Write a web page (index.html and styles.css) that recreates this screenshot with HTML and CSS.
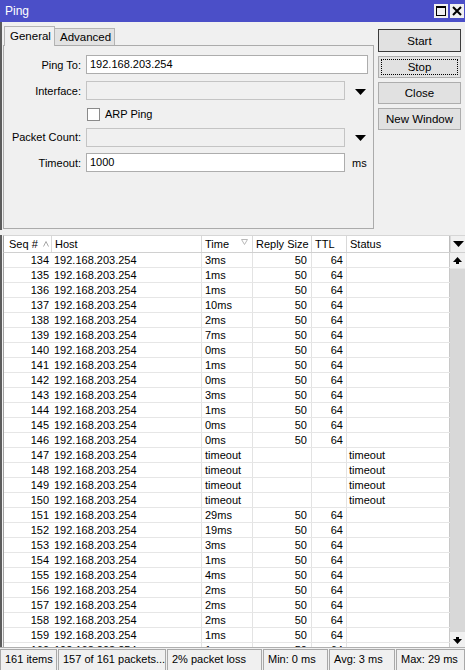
FILE: index.html
```html
<!DOCTYPE html>
<html>
<head>
<meta charset="utf-8">
<link rel="stylesheet" href="styles.css">
</head>
<body>
<div class="window">
  <div class="titlebar">
    <span class="title">Ping</span>
    <div class="tb-btns">
      <span class="tb-btn"><svg width="10" height="10" viewBox="0 0 10 10"><rect x="0.5" y="0.5" width="9" height="9" fill="none" stroke="#000" stroke-width="1"/><rect x="0" y="0" width="10" height="2" fill="#000"/></svg></span>
      <span class="tb-btn"><svg width="10" height="10" viewBox="0 0 10 10"><path d="M1 1 L9 9 M9 1 L1 9" stroke="#000" stroke-width="2"/></svg></span>
    </div>
  </div>
  <div class="top">
    <div class="leftcol">
      <div class="tabs">
        <div class="tab active">General</div>
        <div class="tab">Advanced</div>
      </div>
      <div class="panel">
        <div class="form">
          <div class="lbl">Ping To:</div>
          <div class="input span2">192.168.203.254</div>
          <div class="lbl">Interface:</div>
          <div class="input disabled"></div>
          <div class="dd"><svg width="11" height="6" viewBox="0 0 11 6"><polygon points="0,0 11,0 5.5,6" fill="#000"/></svg></div>
          <div class="lbl"></div>
          <div class="check span2"><span class="box"></span>ARP Ping</div>
          <div class="lbl">Packet Count:</div>
          <div class="input disabled"></div>
          <div class="dd"><svg width="11" height="6" viewBox="0 0 11 6"><polygon points="0,0 11,0 5.5,6" fill="#000"/></svg></div>
          <div class="lbl">Timeout:</div>
          <div class="input">1000</div>
          <div class="unit">ms</div>
        </div>
      </div>
    </div>
    <div class="buttons">
      <div class="btn default">Start</div>
      <div class="btn focus"><span>Stop</span></div>
      <div class="btn">Close</div>
      <div class="btn">New Window</div>
    </div>
  </div>
  <div class="table">
    <div class="thead">
      <div class="th c-seq">Seq #<svg class="sort" width="6" height="6" viewBox="0 0 6 6"><path d="M0.5 5.5 L3 0.5 L5.5 5.5" fill="none" stroke="#a8a8a8" stroke-width="1"/></svg></div>
      <div class="th c-host">Host</div>
      <div class="th c-time">Time<svg class="filt" width="7" height="6" viewBox="0 0 7 6"><path d="M0.5 0.5 L6.5 0.5 L3.5 5.5 Z" fill="none" stroke="#b8b8b8" stroke-width="1"/></svg></div>
      <div class="th c-reply">Reply Size</div>
      <div class="th c-ttl">TTL</div>
      <div class="th c-status">Status</div>
      <div class="th c-menu"><svg width="11" height="6" viewBox="0 0 11 6"><polygon points="0,0 11,0 5.5,6" fill="#000"/></svg></div>
    </div>
    <div class="tbody">
      <div class="rows">
        <div class="row"><div class="c-seq">134</div><div class="c-host">192.168.203.254</div><div class="c-time">3ms</div><div class="c-reply">50</div><div class="c-ttl">64</div><div class="c-status"></div></div>
        <div class="row"><div class="c-seq">135</div><div class="c-host">192.168.203.254</div><div class="c-time">1ms</div><div class="c-reply">50</div><div class="c-ttl">64</div><div class="c-status"></div></div>
        <div class="row"><div class="c-seq">136</div><div class="c-host">192.168.203.254</div><div class="c-time">1ms</div><div class="c-reply">50</div><div class="c-ttl">64</div><div class="c-status"></div></div>
        <div class="row"><div class="c-seq">137</div><div class="c-host">192.168.203.254</div><div class="c-time">10ms</div><div class="c-reply">50</div><div class="c-ttl">64</div><div class="c-status"></div></div>
        <div class="row"><div class="c-seq">138</div><div class="c-host">192.168.203.254</div><div class="c-time">2ms</div><div class="c-reply">50</div><div class="c-ttl">64</div><div class="c-status"></div></div>
        <div class="row"><div class="c-seq">139</div><div class="c-host">192.168.203.254</div><div class="c-time">7ms</div><div class="c-reply">50</div><div class="c-ttl">64</div><div class="c-status"></div></div>
        <div class="row"><div class="c-seq">140</div><div class="c-host">192.168.203.254</div><div class="c-time">0ms</div><div class="c-reply">50</div><div class="c-ttl">64</div><div class="c-status"></div></div>
        <div class="row"><div class="c-seq">141</div><div class="c-host">192.168.203.254</div><div class="c-time">1ms</div><div class="c-reply">50</div><div class="c-ttl">64</div><div class="c-status"></div></div>
        <div class="row"><div class="c-seq">142</div><div class="c-host">192.168.203.254</div><div class="c-time">0ms</div><div class="c-reply">50</div><div class="c-ttl">64</div><div class="c-status"></div></div>
        <div class="row"><div class="c-seq">143</div><div class="c-host">192.168.203.254</div><div class="c-time">3ms</div><div class="c-reply">50</div><div class="c-ttl">64</div><div class="c-status"></div></div>
        <div class="row"><div class="c-seq">144</div><div class="c-host">192.168.203.254</div><div class="c-time">1ms</div><div class="c-reply">50</div><div class="c-ttl">64</div><div class="c-status"></div></div>
        <div class="row"><div class="c-seq">145</div><div class="c-host">192.168.203.254</div><div class="c-time">0ms</div><div class="c-reply">50</div><div class="c-ttl">64</div><div class="c-status"></div></div>
        <div class="row"><div class="c-seq">146</div><div class="c-host">192.168.203.254</div><div class="c-time">0ms</div><div class="c-reply">50</div><div class="c-ttl">64</div><div class="c-status"></div></div>
        <div class="row"><div class="c-seq">147</div><div class="c-host">192.168.203.254</div><div class="c-time">timeout</div><div class="c-reply"></div><div class="c-ttl"></div><div class="c-status">timeout</div></div>
        <div class="row"><div class="c-seq">148</div><div class="c-host">192.168.203.254</div><div class="c-time">timeout</div><div class="c-reply"></div><div class="c-ttl"></div><div class="c-status">timeout</div></div>
        <div class="row"><div class="c-seq">149</div><div class="c-host">192.168.203.254</div><div class="c-time">timeout</div><div class="c-reply"></div><div class="c-ttl"></div><div class="c-status">timeout</div></div>
        <div class="row"><div class="c-seq">150</div><div class="c-host">192.168.203.254</div><div class="c-time">timeout</div><div class="c-reply"></div><div class="c-ttl"></div><div class="c-status">timeout</div></div>
        <div class="row"><div class="c-seq">151</div><div class="c-host">192.168.203.254</div><div class="c-time">29ms</div><div class="c-reply">50</div><div class="c-ttl">64</div><div class="c-status"></div></div>
        <div class="row"><div class="c-seq">152</div><div class="c-host">192.168.203.254</div><div class="c-time">19ms</div><div class="c-reply">50</div><div class="c-ttl">64</div><div class="c-status"></div></div>
        <div class="row"><div class="c-seq">153</div><div class="c-host">192.168.203.254</div><div class="c-time">3ms</div><div class="c-reply">50</div><div class="c-ttl">64</div><div class="c-status"></div></div>
        <div class="row"><div class="c-seq">154</div><div class="c-host">192.168.203.254</div><div class="c-time">1ms</div><div class="c-reply">50</div><div class="c-ttl">64</div><div class="c-status"></div></div>
        <div class="row"><div class="c-seq">155</div><div class="c-host">192.168.203.254</div><div class="c-time">4ms</div><div class="c-reply">50</div><div class="c-ttl">64</div><div class="c-status"></div></div>
        <div class="row"><div class="c-seq">156</div><div class="c-host">192.168.203.254</div><div class="c-time">2ms</div><div class="c-reply">50</div><div class="c-ttl">64</div><div class="c-status"></div></div>
        <div class="row"><div class="c-seq">157</div><div class="c-host">192.168.203.254</div><div class="c-time">2ms</div><div class="c-reply">50</div><div class="c-ttl">64</div><div class="c-status"></div></div>
        <div class="row"><div class="c-seq">158</div><div class="c-host">192.168.203.254</div><div class="c-time">2ms</div><div class="c-reply">50</div><div class="c-ttl">64</div><div class="c-status"></div></div>
        <div class="row"><div class="c-seq">159</div><div class="c-host">192.168.203.254</div><div class="c-time">1ms</div><div class="c-reply">50</div><div class="c-ttl">64</div><div class="c-status"></div></div>
        <div class="row"><div class="c-seq">160</div><div class="c-host">192.168.203.254</div><div class="c-time">1ms</div><div class="c-reply">50</div><div class="c-ttl">64</div><div class="c-status"></div></div>
      </div>
      <div class="vscroll">
        <div class="sbtn"><svg width="9" height="8" viewBox="0 0 9 8"><polygon points="4.5,0 9,5 0,5" fill="#000"/><rect x="3" y="5" width="3" height="2" fill="#000"/></svg></div>
        <div class="track"></div>
        <div class="sbtn"><svg width="9" height="8" viewBox="0 0 9 8"><polygon points="4.5,8 9,3 0,3" fill="#000"/><rect x="3" y="1" width="3" height="2" fill="#000"/></svg></div>
      </div>
    </div>
  </div>
  <div class="status">
    <div class="seg s1">161 items</div>
    <div class="seg s2">157 of 161 packets...</div>
    <div class="seg s3">2% packet loss</div>
    <div class="seg s4">Min: 0 ms</div>
    <div class="seg s5">Avg: 3 ms</div>
    <div class="seg s6">Max: 29 ms</div>
  </div>
</div>
</body>
</html>
```

FILE: styles.css
```css
html, body {
  margin: 0;
  padding: 0;
}
body {
  width: 465px;
  height: 670px;
  overflow: hidden;
  background: #f0f0f0;
  font-family: "Liberation Sans", Arial, sans-serif;
  font-size: 11px;
  color: #000;
}
.window {
  display: flex;
  flex-direction: column;
  height: 670px;
}
.titlebar {
  height: 22px;
  flex: none;
  background: #4b4fc8;
  color: #fff;
  display: flex;
  align-items: center;
  justify-content: space-between;
  font-size: 12px;
  padding: 0 1px 0 5px;
}
.title { margin-top: -1px; }
.tb-btns { display: flex; gap: 2px; }
.tb-btn {
  width: 14px;
  height: 14px;
  background: #f0f0f0;
  display: flex;
  align-items: center;
  justify-content: center;
}
.top {
  flex: none;
  height: 208px;
  display: flex;
  border-left: 2px solid #5c5c5c;
}
.leftcol {
  width: 371px;
  margin-left: 1px;
  display: flex;
  flex-direction: column;
}
.tabs {
  display: flex;
  align-items: flex-end;
  padding-top: 4px;
  padding-left: 1px;
  height: 19px;
  flex: none;
}
.tab {
  height: 17px;
  line-height: 16px;
  padding: 0 5px;
  border: 1px solid #b4b4b4;
  border-bottom: none;
  background: #e2e2e2;
  box-sizing: border-box;
  font-size: 11.5px;
}
.tab.active {
  height: 20px;
  line-height: 18px;
  background: #f0f0f0;
  position: relative;
  z-index: 1;
  margin-bottom: -1px;
  width: 51px;
}
.tab + .tab { border-left: none; width: 60px; }
.panel {
  height: 184px;
  box-sizing: border-box;
  border: 1px solid #ababab;
  padding-top: 9px;
}
.form {
  display: grid;
  grid-template-columns: 77px 259px 20px;
  column-gap: 5px;
  grid-template-rows: 19px 19px 14px 18px 19px;
  row-gap: 7px;
  align-items: center;
}
.lbl {
  text-align: right;
}
.input {
  height: 19px;
  box-sizing: border-box;
  border: 1px solid #adadad;
  background: #fff;
  padding-left: 3px;
  line-height: 17px;
}
.input.disabled {
  background: #f0f0f0;
  border-color: #c4c4c4;
}
.span2 { grid-column: span 2; }
.input.span2 { margin-right: 2px; }
.dd {
  display: flex;
  align-items: center;
  justify-content: center;
  padding-top: 2px;
}
.unit { padding-left: 2px; }
.check {
  display: flex;
  align-items: center;
  gap: 5px;
  margin-left: 1px;
}
.box {
  width: 11px;
  height: 11px;
  border: 1px solid #8a8a8a;
  background: #fff;
  display: inline-block;
}
.buttons {
  margin-left: 4px;
  padding-top: 7px;
  display: flex;
  flex-direction: column;
  gap: 4px;
  width: 83px;
}
.btn {
  height: 22px;
  box-sizing: border-box;
  border: 1px solid #adadad;
  background: #e1e1e1;
  display: flex;
  align-items: center;
  justify-content: center;
  font-size: 11.5px;
}
.btn.default { border-color: #3b3b3b; height: 23px; }
.btn.focus { padding: 2px; }
.btn.focus span {
  flex: 1;
  align-self: stretch;
  border: 1px dotted #000;
  display: flex;
  align-items: center;
  justify-content: center;
}
.table {
  margin-top: 5px;
  flex: none;
  display: flex;
  flex-direction: column;
  border-left: 2px solid #5c5c5c;
}
.thead, .row {
  display: grid;
  grid-template-columns: 48px 150px 51px 59px 35px 103px;
}
.thead {
  grid-template-columns: 48px 150px 51px 59px 35px 103px 15px;
  height: 18px;
  box-sizing: border-box;
  border-top: 1px solid #d6d6d6;
  border-bottom: 1px solid #d0d0d0;
  background: #fff;
  margin-left: 1px;
  border-left: 1px solid #a0a0a0;
}
.th {
  border-right: 1px solid #d9d9d9;
  line-height: 16px;
  padding-left: 3px;
  display: flex;
  align-items: center;
  white-space: nowrap;
}
.th.c-seq { padding-left: 5px; }
.th .sort { margin-left: 5px; }
.th .filt { margin-left: auto; margin-right: 4px; margin-top: -4px; }
.th.c-menu {
  border-right: none;
  border-left: 1px solid #d9d9d9;
  padding-left: 0;
  justify-content: center;
  background: #f0f0f0;
}
.th.c-status { border-right: 1px solid #bdbdbd; }
.tbody {
  display: flex;
  height: 394px;
  margin-left: 1px;
  border-left: 1px solid #a0a0a0;
}
.rows {
  flex: 1;
  overflow: hidden;
  background: #fff;
}
.row {
  height: 15px;
  box-sizing: border-box;
  border-bottom: 1px solid #e6e6e6;
  line-height: 14px;
  white-space: nowrap;
}
.row > div {
  border-right: 1px solid #e3e3e3;
  overflow: hidden;
}
.row .c-seq { text-align: right; padding-right: 2px; border-right-color: #fff; }
.row .c-host { padding-left: 2px; }
.row .c-time { padding-left: 3px; }
.row .c-reply { text-align: right; padding-right: 4px; }
.row .c-ttl { text-align: right; padding-right: 3px; }
.row .c-status { padding-left: 2px; border-right-color: #c8c8c8; }
.vscroll {
  width: 15px;
  flex: none;
  display: flex;
  flex-direction: column;
  background: #f0f0f0;
}
.sbtn {
  height: 15px;
  flex: none;
  display: flex;
  align-items: center;
  justify-content: center;
}
.track {
  flex: 1;
  background: #d8d8d8;
  border-top: 1px solid #e6e6e6;
}
.status {
  flex: none;
  height: 23px;
  display: flex;
  border-top: 1px solid #b0b0b0;
  box-sizing: border-box;
  padding-top: 1px;
  overflow: hidden;
}
.seg {
  box-sizing: border-box;
  border: 1px solid #a8a8a8;
  border-bottom: none;
  height: 21px;
  line-height: 19px;
  padding-left: 4px;
  white-space: nowrap;
  overflow: hidden;
  margin-right: 1px;
  flex: none;
}
.s1 { width: 57px; }
.s2 { width: 108px; }
.s3 { width: 95px; }
.s4 { width: 65px; }
.s5 { width: 66px; }
.s6 { flex: 1; margin-right: 0; }
```
